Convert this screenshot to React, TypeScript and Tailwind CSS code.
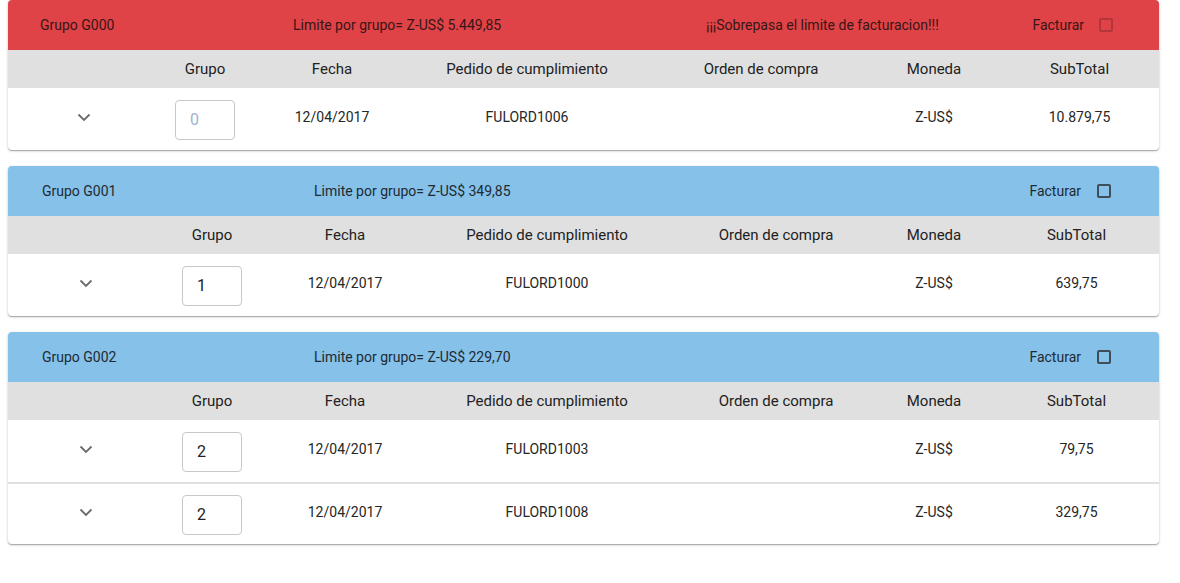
import React from "react";

type Row = { grupo: string; fecha: string; pedido: string; orden: string; moneda: string; subtotal: string; placeholder?: boolean };

type Card = {
  title: string;
  limite: string;
  warn?: string;
  red: boolean;
  cols: string;
  rows: Row[];
};

const cards: Card[] = [
  {
    title: "Grupo G000",
    limite: "Limite por grupo= Z-US$ 5.449,85",
    warn: "¡¡¡Sobrepasa el limite de facturacion!!!",
    red: true,
    cols: "grid-cols-[152px_90px_164px_226px_242px_104px_1fr]",
    rows: [{ grupo: "0", fecha: "12/04/2017", pedido: "FULORD1006", orden: "", moneda: "Z-US$", subtotal: "10.879,75", placeholder: true }],
  },
  {
    title: "Grupo G001",
    limite: "Limite por grupo= Z-US$ 349,85",
    red: false,
    cols: "grid-cols-[156px_96px_170px_234px_224px_92px_1fr]",
    rows: [{ grupo: "1", fecha: "12/04/2017", pedido: "FULORD1000", orden: "", moneda: "Z-US$", subtotal: "639,75" }],
  },
  {
    title: "Grupo G002",
    limite: "Limite por grupo= Z-US$ 229,70",
    red: false,
    cols: "grid-cols-[156px_96px_170px_234px_224px_92px_1fr]",
    rows: [
      { grupo: "2", fecha: "12/04/2017", pedido: "FULORD1003", orden: "", moneda: "Z-US$", subtotal: "79,75" },
      { grupo: "2", fecha: "12/04/2017", pedido: "FULORD1008", orden: "", moneda: "Z-US$", subtotal: "329,75" },
    ],
  },
];

function Chevron() {
  return (
    <svg width="14" height="9" viewBox="0 0 14 9" fill="none">
      <path d="M1.5 1.5 L7 7 L12.5 1.5" stroke="#6b6b6b" strokeWidth="1.8" />
    </svg>
  );
}

function CardView({ c }: { c: Card }) {
  const headers = ["", "Grupo", "Fecha", "Pedido de cumplimiento", "Orden de compra", "Moneda", "SubTotal"];
  return (
    <div className="bg-white rounded-[4px] shadow-[0_1px_1px_rgba(0,0,0,0.25),0_1px_3px_rgba(0,0,0,0.18)] overflow-hidden">
      {c.red ? (
        <div className="h-[50px] bg-[#df4347] flex items-center text-[14px] text-[#3a1515] pl-[32px] pr-[46px]">
          <div className="w-[253px]">{c.title}</div>
          <div className="w-[413px]">{c.limite}</div>
          <div className="flex-1">{c.warn}</div>
          <div>Facturar</div>
          <div className="ml-[15px] w-[14px] h-[14px] border-2 border-[#b3373a] rounded-[2px]" />
        </div>
      ) : (
        <div className="h-[50px] bg-[#85c1e9] flex items-center text-[14px] text-[#1f2a33] pl-[34px] pr-[48px]">
          <div className="w-[272px]">{c.title}</div>
          <div className="flex-1">{c.limite}</div>
          <div>Facturar</div>
          <div className="ml-[16px] w-[14px] h-[14px] border-2 border-[#3e4d58] rounded-[2px]" />
        </div>
      )}
      <div className={`grid ${c.cols} h-[38px] bg-[#e0e0e0] items-center text-[15px] text-[#222]`}>
        {headers.map((h, i) => (
          <div key={i} className={`text-center ${i === 6 ? "pl-[14px]" : ""}`}>{h}</div>
        ))}
      </div>
      {c.rows.map((r, i) => (
        <div key={i} className={`grid ${c.cols} h-[62px] items-center text-[14px] text-[#262626] ${i > 0 ? "border-t-2 border-[#e0e0e0]" : ""}`}>
          <div className="flex justify-center pb-[4px]"><Chevron /></div>
          <div className="flex justify-center pt-[2px]">
            <div className={`w-[60px] h-[40px] border border-[#c8c8c8] rounded-[4px] flex items-center pl-[14px] text-[16px] ${r.placeholder ? "text-[#9fb4cb]" : "text-[#222]"}`}>
              {r.grupo}
            </div>
          </div>
          <div className="text-center pb-[4px]">{r.fecha}</div>
          <div className="text-center pb-[4px]">{r.pedido}</div>
          <div className="text-center pb-[4px]">{r.orden}</div>
          <div className="text-center pb-[4px]">{r.moneda}</div>
          <div className="text-center pb-[4px] pl-[14px]">{r.subtotal}</div>
        </div>
      ))}
    </div>
  );
}

export default function App() {
  return (
    <div className="w-[1180px] h-[583px] bg-white font-['Roboto',sans-serif] px-[8px] flex flex-col gap-[16px] pr-[21px]">
      {cards.map((c, i) => (
        <CardView key={i} c={c} />
      ))}
    </div>
  );
}
